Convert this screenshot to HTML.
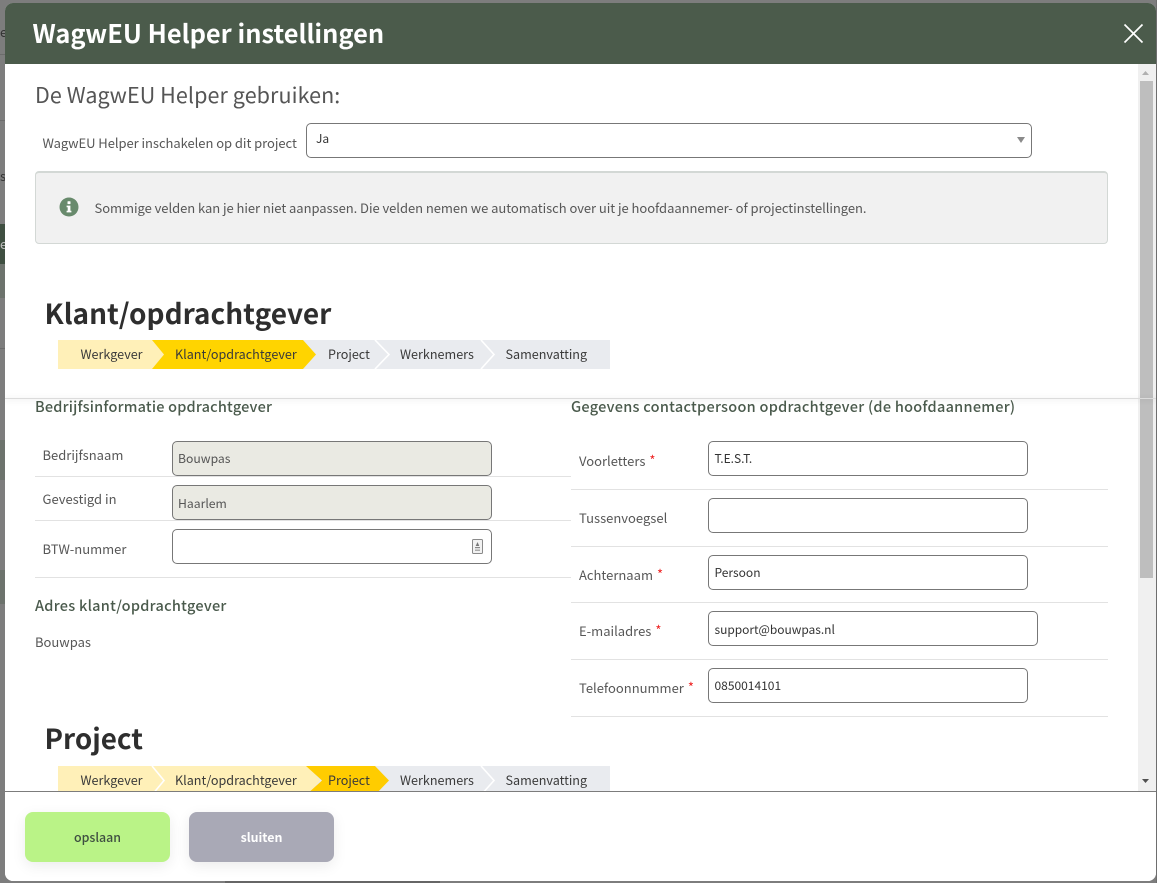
<!DOCTYPE html>
<html lang="nl"><head><meta charset="utf-8"><title>WagwEU Helper instellingen</title>
<style>
*{box-sizing:border-box}
html,body{margin:0;padding:0;width:1157px;height:883px;overflow:hidden;background:#7d7d7d;font-family:"Noto Sans CJK SC","Liberation Sans",sans-serif}
.a{position:absolute}
.t{position:absolute;white-space:nowrap;line-height:20px;font-size:13px;color:#575757}
#m{position:absolute;left:5px;top:3px;width:1151px;height:878px;background:#fff;border-radius:8px;overflow:hidden}
.hl{position:absolute;height:1px;background:#e2e2e2}
.i{position:absolute;height:35px;border:1px solid #777;border-radius:5px;background:#fff}
.i.d{background:#eaeae3}
.v{position:absolute;white-space:nowrap;line-height:20px;font-size:12px;color:#333}
.r{color:#e22;font-size:13px;margin-left:4px;position:relative;top:-1px}
.h3{position:absolute;white-space:nowrap;line-height:20px;font-size:14.5px;font-weight:500;color:#4a5a4c;letter-spacing:.27px}
.s{position:absolute;white-space:nowrap;line-height:26px;font-size:12.6px;color:#3a3a3a;text-align:center}
.f{position:absolute;left:0;white-space:nowrap;width:5px;overflow:hidden;font-size:13px;line-height:16px;color:#333}
</style></head><body>
<div class="a" style="left:0;top:224px;width:5px;height:40px;background:#3f4f41"></div>
<div class="a" style="left:0;top:264px;width:5px;height:34px;background:#6d736d"></div>
<div class="a" style="left:0;top:440px;width:5px;height:40px;background:#6d736d"></div>
<div class="a" style="left:0;top:570px;width:5px;height:34px;background:#6d736d"></div>
<div class="a" style="left:0;top:54px;width:5px;height:1px;background:#6c6c6c"></div>
<div class="a" style="left:0;top:120px;width:5px;height:1px;background:#6c6c6c"></div>
<div class="a" style="left:0;top:348px;width:5px;height:1px;background:#6c6c6c"></div>
<div class="f" style="top:24px">e</div>
<div class="f" style="top:168px">s</div>
<div class="f" style="top:236px;color:#bbb">e</div>
<div class="a" style="left:1156px;top:0;width:1px;height:883px;background:#6e6e6e"></div>
<div class="a" style="left:225px;top:881px;width:215px;height:2px;background:#666"></div>

<div id="m">
  <!-- coordinates inside are page coords minus (5,3) -->
  <div class="a" style="left:0;top:0;width:1151px;height:61px;background:#4b5b4b"></div>
  <div class="t" style="left:27.5px;top:12px;line-height:36px;font-size:25.4px;font-weight:700;color:#fff">WagwEU Helper instellingen</div>
  <svg class="a" style="left:1118px;top:20px" width="21" height="21" viewBox="0 0 21 21"><path d="M1.5 1.5L19.5 19.5M19.5 1.5L1.5 19.5" stroke="#fff" stroke-width="1.7" fill="none"/></svg>

  <!-- scrollbar -->
  <div class="a" style="left:1133px;top:61px;width:18px;height:728px;background:#f0f0f0"></div>
  <div class="a" style="left:1135px;top:78px;width:13px;height:497px;background:#bebebe"></div>
  <svg class="a" style="left:1136px;top:67px" width="9" height="6"><path d="M4.5 1L8 5H1Z" fill="#b0b0b0"/></svg>
  <svg class="a" style="left:1136px;top:775px" width="9" height="6"><path d="M1 1H8L4.5 5Z" fill="#505050"/></svg>

  <div class="t" style="left:30px;top:78px;line-height:28px;font-size:21.5px;color:#555;letter-spacing:.08px">De WagwEU Helper gebruiken:</div>
  <div class="t" style="left:37.5px;top:130px;letter-spacing:-.05px">WagwEU Helper inschakelen op dit project</div>
  <div class="i" style="left:301px;top:120px;width:726px"></div>
  <div class="v" style="left:311px;top:126px">Ja</div>
  <svg class="a" style="left:1012px;top:134px" width="9" height="6"><path d="M0 0H8L4 6Z" fill="#8a8a8a"/></svg>

  <div class="a" style="left:30px;top:168px;width:1073px;height:73px;background:#f1f1f1;border:1px solid #d3d8d5;border-top-width:2px;border-radius:4px"></div>
  <svg class="a" style="left:54px;top:194px" width="20" height="20" viewBox="0 0 20 20"><circle cx="10" cy="10" r="9.5" fill="#688a6c"/><rect x="8.5" y="4.3" width="3" height="2.8" rx=".5" fill="#fff"/><path d="M7.6 8.6H11.4V13.8H12.4V15.4H7.6V13.8H8.7V10.2H7.6Z" fill="#fff"/></svg>
  <div class="t" style="left:89.5px;top:195px;letter-spacing:-.05px">Sommige velden kan je hier niet aanpassen. Die velden nemen we automatisch over uit je hoofdaannemer- of projectinstellingen.</div>

  <div class="t" style="left:39.5px;top:289px;line-height:42px;font-size:28px;font-weight:700;color:#2e2e2e">Klant/opdrachtgever</div>

  <!-- stepper 1 -->
  <svg class="a" style="left:53px;top:337px" width="552" height="29" viewBox="0 0 552 29">
    <rect width="552" height="29" fill="#e9ebef"/>
    <path d="M0 0H94L106 14.5L94 29H0Z" fill="#fff0b8"/>
    <path d="M94 0H245L258 14.5L245 29H94L106 14.5Z" fill="#ffd400"/>
    <path d="M317 0L331 14.5L317 29M423 0L436 14.5L423 29" fill="none" stroke="#fff" stroke-width="1.6"/>
  </svg>
  <div class="s" style="left:75.5px;top:338px">Werkgever</div>
  <div class="s" style="left:170px;top:338px">Klant/opdrachtgever</div>
  <div class="s" style="left:323px;top:338px">Project</div>
  <div class="s" style="left:395px;top:338px">Werknemers</div>
  <div class="s" style="left:500.5px;top:338px">Samenvatting</div>

  <!-- sticky shadow -->
  <div class="a" style="left:0;top:395px;width:1151px;height:1px;background:#dcdcdc;box-shadow:0 1px 6px rgba(0,0,0,.2)"></div>

  <div class="h3" style="left:30px;top:394px;letter-spacing:.2px">Bedrijfsinformatie opdrachtgever</div>
  <div class="h3" style="left:566px;top:394px">Gegevens contactpersoon opdrachtgever (de hoofdaannemer)</div>

  <div class="hl" style="left:30px;top:473px;width:536px"></div>
  <div class="hl" style="left:30px;top:517px;width:536px"></div>
  <div class="hl" style="left:30px;top:574px;width:536px"></div>
  <div class="t" style="left:37.5px;top:442px">Bedrijfsnaam</div>
  <div class="t" style="left:37.5px;top:486px">Gevestigd in</div>
  <div class="t" style="left:37.5px;top:536px">BTW-nummer</div>
  <div class="i d" style="left:167px;top:438px;width:320px"></div>
  <div class="i d" style="left:167px;top:482px;width:320px"></div>
  <div class="i" style="left:167px;top:526px;width:320px"></div>
  <div class="v" style="left:173px;top:445px;color:#555;font-size:12.2px">Bouwpas</div>
  <div class="v" style="left:173px;top:489.5px;color:#555;font-size:12.2px">Haarlem</div>
  <svg class="a" style="left:467px;top:536px" width="11" height="15" viewBox="0 0 11 15"><rect x=".5" y=".5" width="10" height="14" rx="1" fill="#f2f2f2" stroke="#8a8a8a"/><path d="M5.5 3L7.3 7H3.7Z" fill="#777"/><rect x="3" y="8" width="5" height="1.2" fill="#888"/><rect x="3" y="10.5" width="5" height="1.5" fill="#aaa"/></svg>

  <div class="h3" style="left:30px;top:593px">Adres klant/opdrachtgever</div>
  <div class="t" style="left:30px;top:629px">Bouwpas</div>

  <div class="hl" style="left:566px;top:486px;width:537px"></div>
  <div class="hl" style="left:566px;top:543px;width:537px"></div>
  <div class="hl" style="left:566px;top:599px;width:537px"></div>
  <div class="hl" style="left:566px;top:656px;width:537px"></div>
  <div class="hl" style="left:566px;top:713px;width:537px"></div>

  <div class="t" style="left:574px;top:448px">Voorletters<span class="r">*</span></div>
  <div class="t" style="left:574px;top:505px">Tussenvoegsel</div>
  <div class="t" style="left:574px;top:562px">Achternaam<span class="r">*</span></div>
  <div class="t" style="left:574px;top:618px">E-mailadres<span class="r">*</span></div>
  <div class="t" style="left:574px;top:675px">Telefoonnummer<span class="r">*</span></div>

  <div class="i" style="left:703px;top:438px;width:320px"></div>
  <div class="i" style="left:703px;top:495px;width:320px"></div>
  <div class="i" style="left:703px;top:552px;width:320px"></div>
  <div class="i" style="left:703px;top:608px;width:330px"></div>
  <div class="i" style="left:703px;top:665px;width:320px"></div>
  <div class="v" style="left:709.5px;top:446px">T.E.S.T.</div>
  <div class="v" style="left:709.5px;top:560px">Persoon</div>
  <div class="v" style="left:709.5px;top:617px;letter-spacing:-.03px">support@bouwpas.nl</div>
  <div class="v" style="left:709.5px;top:673px">0850014101</div>

  <div class="t" style="left:39.5px;top:714px;line-height:42px;font-size:27.8px;font-weight:700;color:#2e2e2e">Project</div>

  <!-- stepper 2 -->
  <svg class="a" style="left:53px;top:763px" width="552" height="26" viewBox="0 0 552 26">
    <rect width="552" height="26" fill="#e9ebef"/>
    <path d="M0 0H250L262 14.5L250 29H0Z" fill="#fff0b8"/>
    <path d="M94 0L106 14.5L94 29" fill="none" stroke="#fff" stroke-width="1.6"/>
    <path d="M248 0H317L331 14.5L317 29H248L264 14.5Z" fill="#ffcc00"/>
    <path d="M423 0L436 14.5L423 29" fill="none" stroke="#fff" stroke-width="1.6"/>
  </svg>
  <div class="s" style="left:75.5px;top:764px">Werkgever</div>
  <div class="s" style="left:170px;top:764px">Klant/opdrachtgever</div>
  <div class="s" style="left:323px;top:764px">Project</div>
  <div class="s" style="left:395px;top:764px">Werknemers</div>
  <div class="s" style="left:500.5px;top:764px">Samenvatting</div>

  <!-- footer -->
  <div class="a" style="left:0;top:788px;width:1151px;height:90px;background:#fff;border-top:1px solid #7c7c7c"></div>
  <div class="a" style="left:20px;top:809px;width:145px;height:50px;border-radius:8px;background:#baf387;box-shadow:0 4px 14px rgba(0,0,0,.08);text-align:center;line-height:50px;font-size:12.4px;font-weight:500;color:#3f4f41">opslaan</div>
  <div class="a" style="left:184px;top:809px;width:145px;height:50px;border-radius:8px;background:#a9a9b6;box-shadow:0 4px 14px rgba(0,0,0,.08);text-align:center;line-height:50px;font-size:12.4px;font-weight:700;color:#fff">sluiten</div>
</div>
</body></html>
